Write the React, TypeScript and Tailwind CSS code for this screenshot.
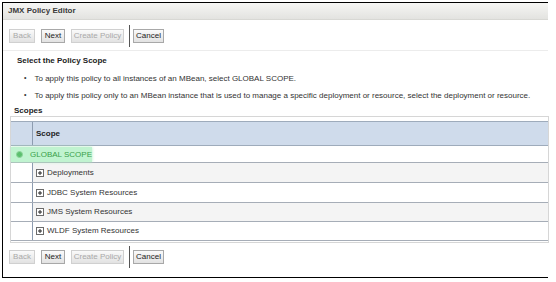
import React from "react"

const font = { fontFamily: '"Liberation Sans", Arial, sans-serif' }

interface BtnProps {
  label: string
  disabled?: boolean
  width: string
}

function Btn({ label, disabled, width }: BtnProps) {
  return (
    <div
      className={`${width} h-[14px] flex items-center justify-center text-[8px] leading-none whitespace-nowrap border bg-gradient-to-b from-[#fafafa] to-[#e2e2e2] ${
        disabled ? "border-[#d0d0d0] text-[#a9a9a9]" : "border-[#a8a8a8] text-[#222]"
      }`}
    >
      {label}
    </div>
  )
}

function ButtonBar() {
  return (
    <div className="flex items-center h-[22px] pl-[6px]">
      <Btn label="Back" disabled width="w-[26px]" />
      <div className="w-[6px]" />
      <Btn label="Next" width="w-[24px]" />
      <div className="w-[6px]" />
      <Btn label="Create Policy" disabled width="w-[53px]" />
      <div className="w-[5px]" />
      <div className="w-px h-[22px] bg-[#555]" />
      <div className="w-[3px]" />
      <Btn label="Cancel" width="w-[31px]" />
    </div>
  )
}

function PlusBox() {
  return (
    <svg width="8" height="8" viewBox="0 0 8 8" className="shrink-0">
      <rect x="0.5" y="0.5" width="7" height="7" fill="#fff" stroke="#6b6b6b" />
      <path d="M2 4h4M4 2v4" stroke="#222" strokeWidth="1" />
    </svg>
  )
}

const rows = [
  { label: "Deployments", bg: "bg-[#f4f4f4]", h: "h-[20px]" },
  { label: "JDBC System Resources", bg: "bg-white", h: "h-[20px]" },
  { label: "JMS System Resources", bg: "bg-[#f4f4f4]", h: "h-[19px]" },
  { label: "WLDF System Resources", bg: "bg-white", h: "h-[19px]" },
]

export default function App() {
  return (
    <div className="w-[556px] h-[282px] bg-white overflow-hidden pt-[2px] pl-[2px]" style={font}>
      <div className="w-[546px] h-[276px] border-l border-t border-b border-black">
        {/* Title bar */}
        <div className="h-[17px] flex items-center pl-[5px] bg-gradient-to-b from-[#f6f6f4] to-[#e3e3e0] border-b border-[#d8d8d4]">
          <span className="text-[8px] font-bold text-[#3a3a3a]">JMX Policy Editor</span>
        </div>

        <div className="mt-[5px]">
          <ButtonBar />
        </div>

        <div className="mt-[3px] h-px bg-[#ececec]" />

        {/* Intro */}
        <div className="pl-[14px] mt-[5px] h-[10px] flex items-center">
          <span className="text-[8px] font-bold text-[#222]">Select the Policy Scope</span>
        </div>
        <ul className="mt-[4px] pl-[21px] text-[8px] text-[#333]">
          <li className="h-[17px] flex items-center gap-[8px] whitespace-nowrap">
            <span className="text-[7px]">•</span>
            To apply this policy to all instances of an MBean, select GLOBAL SCOPE.
          </li>
          <li className="h-[17px] flex items-center gap-[8px] whitespace-nowrap">
            <span className="text-[7px]">•</span>
            To apply this policy only to an MBean instance that is used to manage a specific deployment or resource, select the deployment or resource.
          </li>
        </ul>

        <div className="pl-[11px] h-[12px] flex items-end">
          <span className="text-[8px] leading-[10px] font-bold text-[#222]">Scopes</span>
        </div>

        {/* Table */}
        <div className="ml-[7px] w-[539px] border border-[#d6d6d6] pt-[4px] pb-[1px]">
          <div className="border-t border-b border-[#9eabbb] h-[25px] flex bg-[#cfdbeb]">
            <div className="w-[22px] border-r border-[#8d9cb0]" />
            <div className="flex items-center pl-[3px] text-[8px] font-bold text-[#222]">Scope</div>
          </div>
          <div className="h-[17px] flex border-b border-[#a6adb7] bg-white">
            <div className="w-[81px] h-[15px] mt-px flex items-center bg-[#c0f3d0] shadow-[0_0_3px_#b6f0c6]">
              <div className="w-[22px] flex justify-center">
                <div className="w-[7px] h-[7px] rounded-full bg-[#5bbf6e] border border-[#8fd59c]" />
              </div>
              <span className="pl-[3px] text-[8px] whitespace-nowrap text-[#3aa04a]">GLOBAL SCOPE</span>
            </div>
          </div>
          {rows.map((r) => (
            <div key={r.label} className={`${r.h} flex border-b border-[#a6adb7] ${r.bg}`}>
              <div className="w-[22px] border-r border-[#8d9cb0] bg-white" />
              <div className="flex items-center gap-[3px] pl-[3px] text-[8px] whitespace-nowrap text-[#333]">
                <PlusBox />
                {r.label}
              </div>
            </div>
          ))}
        </div>

        <div className="mt-[3px]">
          <ButtonBar />
        </div>
      </div>
    </div>
  )
}
